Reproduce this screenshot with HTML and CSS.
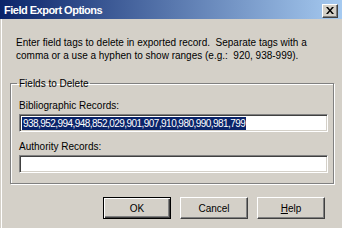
FILE: index.html
```html
<!DOCTYPE html>
<html lang="en">
<head>
<meta charset="UTF-8" />
<title>Field Export Options</title>
<link rel="stylesheet" href="styles.css">
</head>
<body>
  <div class="window" role="dialog" aria-label="Field Export Options">
    <div class="titlebar">
      <span class="title">Field Export Options</span>
      <button type="button" class="close" aria-label="Close">
        <svg width="8" height="7" viewBox="0 0 8 7"><path d="M0 0h2l2 2.5L6 0h2L5 3.5 8 7H6L4 4.5 2 7H0l3-3.5z" fill="#000"/></svg>
      </button>
    </div>
    <div class="content">
      <p class="intro">Enter field tags to delete in exported record.&nbsp; Separate tags with a<br>comma or a use a hyphen to show ranges (e.g.:&nbsp; 920, 938-999).</p>

      <fieldset class="group">
        <legend>Fields to Delete</legend>
        <label class="label" for="biblio">Bibliographic Records:</label>
        <div class="field" id="biblio"><span class="selected">938,952,994,948,852,029,901,907,910,980,990,981,799</span></div>
        <label class="label" for="authority">Authority Records:</label>
        <div class="field" id="authority"></div>
      </fieldset>

      <div class="actions">
        <button type="button" class="btn default">OK</button>
        <button type="button" class="btn">Cancel</button>
        <button type="button" class="btn"><u>H</u>elp</button>
      </div>
    </div>
  </div>
</body>
</html>
```

FILE: styles.css
```css
:root {
  --face: #d4d0c8;
  --shadow: #808080;
  --dark: #404040;
  --highlight: #ffffff;
  --title-start: #0a246a;
  --title-end: #a6caf0;
  --font-family: "Liberation Sans", Arial, sans-serif;
}

* {
  box-sizing: border-box;
}

body {
  margin: 0;
  font-family: var(--font-family);
  font-size: 10px;
  color: #000;
}

.window {
  width: 342px;
  height: 228px;
  background-color: var(--face);
  box-shadow: inset 1px 0 var(--face), inset 2px 0 var(--highlight);
  overflow: hidden;
}

.titlebar {
  height: 19px;
  display: flex;
  align-items: center;
  justify-content: space-between;
  padding: 0 4px 0 4px;
  background: linear-gradient(to right, var(--title-start), var(--title-end));
}

.title {
  color: #fff;
  font-weight: bold;
  font-size: 11px;
  letter-spacing: -0.5px;
}

.close {
  width: 16px;
  height: 14px;
  padding: 0;
  margin-top: 2px;
  display: flex;
  align-items: center;
  justify-content: center;
  background-color: var(--face);
  border: 1px solid;
  border-color: var(--highlight) var(--dark) var(--dark) var(--highlight);
  box-shadow: inset -1px -1px var(--shadow);
}

.content {
  padding: 17px 0 0 0;
}

.intro {
  margin: 0 0 0 16px;
  line-height: 13px;
}

.group {
  margin: 15px 8px 0 10px;
  padding: 0 5px 10px 8px;
  border: 1px solid var(--shadow);
  box-shadow: inset 1px 1px var(--highlight), 1px 1px var(--highlight);
}

.group legend {
  margin-left: -2px;
  padding: 0 2px;
  line-height: 13px;
}

.label {
  display: block;
  line-height: 13px;
  margin-top: 8px;
  margin-bottom: 2px;
}

.group legend + .label {
  margin-top: 9px;
}

.field {
  height: 18px;
  padding: 2px 0 0 2px;
  background-color: #fff;
  border: 1px solid;
  border-color: var(--shadow) var(--highlight) var(--highlight) var(--shadow);
  box-shadow: inset 1px 1px var(--dark), inset -1px -1px var(--face);
  line-height: 13px;
  white-space: nowrap;
}

.selected {
  display: inline-block;
  background-color: var(--title-start);
  color: #fff;
  padding: 0 1px;
  letter-spacing: -0.55px;
}

.actions {
  display: flex;
  justify-content: flex-end;
  gap: 9px;
  padding: 13px 17px 0 0;
}

.btn {
  width: 68px;
  height: 22px;
  padding: 0;
  font-family: var(--font-family);
  font-size: 10px;
  color: #000;
  background-color: var(--face);
  border: 1px solid;
  border-color: var(--highlight) var(--dark) var(--dark) var(--highlight);
  box-shadow: inset -1px -1px var(--shadow);
}

.btn.default {
  border: 1px solid #000;
  box-shadow: inset 1px 1px var(--highlight), inset -1px -1px var(--dark), inset -2px -2px var(--shadow);
}
```
